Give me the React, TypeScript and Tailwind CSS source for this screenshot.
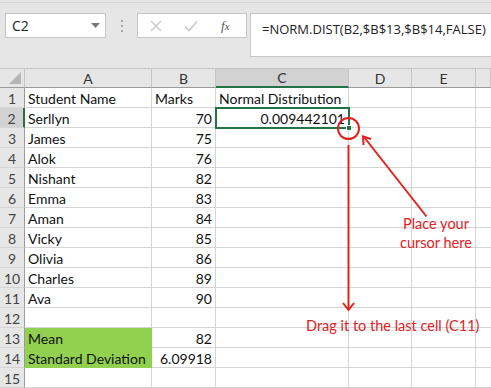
import React from "react";

const cols = [25, 127, 64, 133, 63, 64, 15];
const colLetters = ["", "A", "B", "C", "D", "E", ""];

type Row = { n: number; a?: string; b?: string; c?: string; green?: boolean };
const rows: Row[] = [
  { n: 1, a: "Student Name", b: "Marks", c: "Normal Distribution" },
  { n: 2, a: "Serllyn", b: "70", c: "0.009442101" },
  { n: 3, a: "James", b: "75" },
  { n: 4, a: "Alok", b: "76" },
  { n: 5, a: "Nishant", b: "82" },
  { n: 6, a: "Emma", b: "83" },
  { n: 7, a: "Aman", b: "84" },
  { n: 8, a: "Vicky", b: "85" },
  { n: 9, a: "Olivia", b: "86" },
  { n: 10, a: "Charles", b: "89" },
  { n: 11, a: "Ava", b: "90" },
  { n: 12 },
  { n: 13, a: "Mean", b: "82", green: true },
  { n: 14, a: "Standard Deviation", b: "6.09918", green: true },
  { n: 15 },
];

const cellFont = { fontFamily: "Lato, 'Open Sans', sans-serif" };

export default function App() {
  return (
    <div className="relative w-[491px] h-[388px] overflow-hidden bg-white" style={cellFont}>
      {/* Toolbar */}
      <div className="h-[68px] bg-[#e6e6e6] relative">
        <div className="absolute left-0 right-0 top-[2px] h-px bg-[#d4d4d4]" />
        <div className="flex items-start pt-[13px] pl-[5px]">
          <div className="shrink-0 w-[101px] h-[25px] bg-white border border-[#c6c6c6] flex items-center justify-between pl-[6px] pr-[5px]">
            <span className="text-[14px] text-[#222]" style={{ fontFamily: "'Open Sans', sans-serif" }}>C2</span>
            <svg width="9" height="5" viewBox="0 0 9 5"><path d="M0 0 L9 0 L4.5 5 Z" fill="#7a7a7a" /></svg>
          </div>
          <div className="shrink-0 w-[31px] h-[25px] flex flex-col items-center justify-center gap-[3px]">
            <div className="w-[2px] h-[2px] bg-[#a8a8a8]" />
            <div className="w-[2px] h-[2px] bg-[#a8a8a8]" />
            <div className="w-[2px] h-[2px] bg-[#a8a8a8]" />
          </div>
          <div className="shrink-0 w-[110px] h-[25px] bg-white border border-[#c6c6c6] flex items-center">
            <svg className="ml-[12px]" width="12" height="12" viewBox="0 0 12 12">
              <path d="M1 1 L11 11 M11 1 L1 11" stroke="#c8c8c8" strokeWidth="1.4" />
            </svg>
            <svg className="ml-[22px]" width="14" height="12" viewBox="0 0 14 12">
              <path d="M1 6.5 L5 10.5 L13 1.5" stroke="#c8c8c8" strokeWidth="1.6" fill="none" />
            </svg>
            <span className="ml-[23px] text-[13px] italic text-[#555]" style={{ fontFamily: "'Liberation Serif', serif" }}>
              f<span className="text-[11px]">x</span>
            </span>
          </div>
          <div className="ml-[3px] flex-1 min-w-0 h-[44px] bg-white border border-[#c6c6c6] border-r-0 pl-[11px] pt-[2px] whitespace-nowrap overflow-hidden">
            <span className="text-[13px] text-[#222]" style={{ fontFamily: "'Open Sans', sans-serif" }}>
              =NORM.DIST(B2,$B$13,$B$14,FALSE)
            </span>
          </div>
        </div>
      </div>

      {/* Column headers */}
      <div className="flex h-[20px] bg-[#e6e6e6] border-t border-[#c6c6c6]">
        {cols.map((w, i) => (
          <div
            key={i}
            className={
              "shrink-0 relative h-full flex items-center justify-center text-[14px] text-[#333] border-r " +
              (i === 3
                ? "bg-[#d2d2d2] border-[#c6c6c6] border-b-2 border-b-[#217346]"
                : "border-[#c6c6c6] border-b border-b-[#9b9b9b]")
            }
            style={{ width: w }}
          >
            {i === 0 ? (
              <svg className="absolute right-[3px] bottom-[3px]" width="12" height="12" viewBox="0 0 12 12">
                <path d="M12 0 L12 12 L0 12 Z" fill="#b5b5b5" />
              </svg>
            ) : (
              colLetters[i]
            )}
          </div>
        ))}
      </div>

      {/* Rows */}
      {rows.map((r) => (
        <div key={r.n} className="flex h-[20px] whitespace-nowrap">
          <div
            className={
              "shrink-0 w-[25px] h-full flex items-center justify-center pt-px text-[14px] text-[#444] border-b border-[#d4d4d4] " +
              (r.n === 2 ? "bg-[#d2d2d2] border-r-2 border-r-[#217346]" : "bg-[#e6e6e6] border-r border-r-[#9b9b9b]")
            }
          >
            {r.n}
          </div>
          <div
            className={
              "shrink-0 w-[127px] h-full flex items-center pl-[3px] pt-px text-[14px] text-[#111] border-r border-b " +
              (r.green ? "bg-[#92d050] border-[#92d050]" : "border-[#d4d4d4]")
            }
          >
            {r.a}
          </div>
          <div
            className={
              "shrink-0 w-[64px] h-full flex items-center pt-px text-[14px] text-[#111] border-r border-b border-[#d4d4d4] pr-[3px] " +
              (r.n === 1 ? "justify-start pl-[3px]" : "justify-end")
            }
          >
            {r.b}
          </div>
          <div
            className={
              "shrink-0 relative w-[133px] h-full flex items-center pt-px text-[14px] text-[#111] border-r border-b border-[#d4d4d4] " +
              (r.n === 1 ? "justify-start pl-[3px]" : "justify-end pr-[3px]")
            }
          >
            {r.c}
          </div>
          <div className="shrink-0 w-[63px] h-full border-r border-b border-[#d4d4d4]" />
          <div className="shrink-0 w-[64px] h-full border-r border-b border-[#d4d4d4]" />
          <div className="shrink-0 w-[15px] h-full border-b border-[#d4d4d4]" />
        </div>
      ))}

      {/* Selection border on C2 */}
      <div className="absolute left-[215px] top-[107px] w-[135px] h-[22px] border-2 border-[#217346]" />
      <div className="absolute left-[346px] top-[125px] w-[6px] h-[6px] bg-[#217346] border border-white" />

      {/* Red annotations */}
      <svg className="absolute left-0 top-0" width="491" height="388" viewBox="0 0 491 388">
        <circle cx="348.5" cy="128.5" r="10.5" fill="none" stroke="#e3211f" strokeWidth="2" />
        <path d="M348.5 145 L348.5 309" stroke="#e3211f" strokeWidth="2" />
        <path d="M343 303 L348.5 310 L354 303" stroke="#e3211f" strokeWidth="2" fill="none" />
        <path d="M426.5 216.5 L364 137" stroke="#e3211f" strokeWidth="2" />
        <path d="M363.5 145 L363 136.5 L371 139" stroke="#e3211f" strokeWidth="2" fill="none" />
      </svg>
      <div className="absolute left-[396px] top-[214px] w-[80px] text-center text-[14.5px] leading-[19px] text-[#e3211f] whitespace-nowrap">
        Place your
        <br />
        cursor here
      </div>
      <div className="absolute left-[306px] top-[316px] text-[14.5px] leading-[20px] text-[#e3211f] whitespace-nowrap">
        Drag it to the last cell (C11)
      </div>
    </div>
  );
}
